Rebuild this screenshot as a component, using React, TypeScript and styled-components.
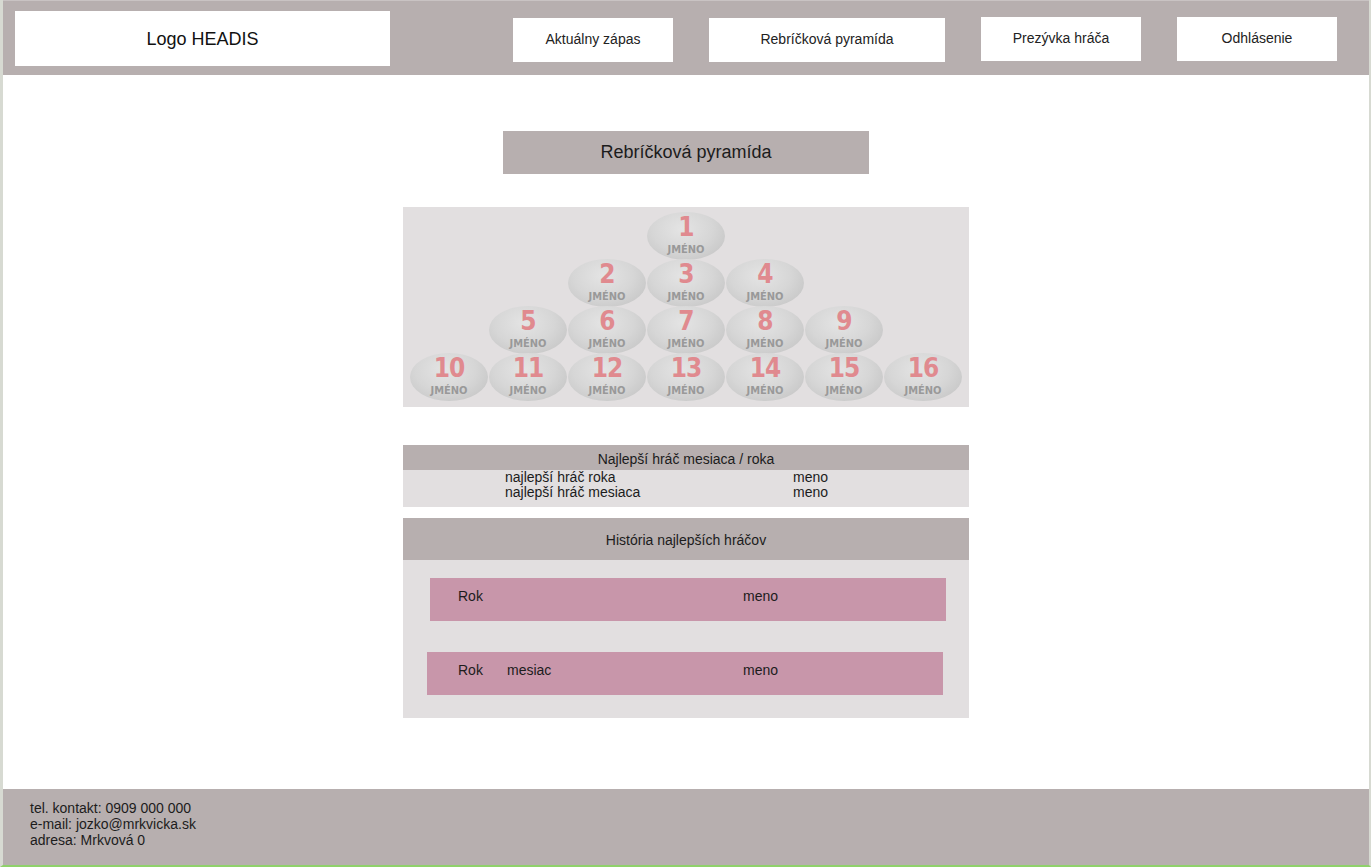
import React from "react";
import styled, { createGlobalStyle } from "styled-components";

const GlobalStyle = createGlobalStyle`
  html, body { margin: 0; padding: 0; background: #ffffff; }
  body { font-family: "Liberation Sans", Arial, sans-serif; color: #1a1a1a; }
  * { box-sizing: border-box; }
`;

const Page = styled.div`
  width: 1371px;
  height: 867px;
  border-left: 3px solid #d7dad2;
  border-right: 2px solid #d7dad2;
  border-bottom: 2px solid #8fd16b;
  display: flex;
  flex-direction: column;
  background: #ffffff;
`;

const Header = styled.header`
  height: 75px;
  background: #b7afaf;
  border-top: 1px solid #c9c3c3;
  display: flex;
  align-items: flex-start;
  padding: 0 32px 0 12px;
`;

const Logo = styled.div`
  margin-top: 10px;
  width: 375px;
  height: 55px;
  background: #ffffff;
  display: flex;
  align-items: center;
  justify-content: center;
  padding-top: 2px;
  font-size: 18px;
  color: #111;
`;

const Nav = styled.nav`
  margin-left: auto;
  display: flex;
  gap: 36px;
  margin-top: 16px;
`;

const NavButton = styled.div<{ $w: number; $dy?: number }>`
  width: ${(p) => p.$w}px;
  height: 44px;
  margin-top: ${(p) => p.$dy ?? 0}px;
  background: #ffffff;
  display: flex;
  align-items: center;
  justify-content: center;
  padding-bottom: 3px;
  font-size: 14px;
  color: #222;
`;

const Main = styled.main`
  height: 714px;
  display: flex;
  flex-direction: column;
  align-items: center;
`;

const Title = styled.div`
  margin-top: 56px;
  width: 366px;
  height: 43px;
  background: #b7afaf;
  display: flex;
  align-items: center;
  justify-content: center;
  font-size: 18px;
  color: #1c1c1c;
`;

const Pyramid = styled.div`
  margin-top: 33px;
  width: 566px;
  height: 200px;
  background: #e2dfe0;
  padding-top: 5px;
  display: flex;
  flex-direction: column;
  align-items: center;
`;

const BallRow = styled.div`
  height: 47px;
  display: flex;
  gap: 1px;
`;

const Ball = styled.div`
  width: 78px;
  height: 48px;
  border-radius: 50%;
  background: radial-gradient(ellipse at 45% 35%, #e4e4e4 0%, #d6d6d6 50%, #c6c6c6 85%, #bfbfbf 100%);
  display: flex;
  flex-direction: column;
  align-items: center;
`;

const BallNumber = styled.div`
  font-family: "DejaVu Sans Condensed", "DejaVu Sans", sans-serif;
  font-stretch: condensed;
  font-weight: bold;
  font-size: 26px;
  line-height: 31px;
  height: 31px;
  color: #e08a8f;
  letter-spacing: -1px;
`;

const BallName = styled.div`
  font-family: "DejaVu Sans Condensed", "DejaVu Sans", sans-serif;
  font-stretch: condensed;
  font-weight: bold;
  font-size: 11px;
  line-height: 13px;
  color: #999999;
`;

const Section = styled.section<{ $mt: number }>`
  margin-top: ${(p) => p.$mt}px;
  width: 566px;
  background: #e2dfe0;
`;

const SectionHeader = styled.div<{ $h: number }>`
  height: ${(p) => p.$h}px;
  background: #b7afaf;
  display: flex;
  align-items: center;
  justify-content: center;
  font-size: 14px;
  color: #1c1c1c;
  padding-top: 2px;
`;

const BestBody = styled.div`
  padding: 0 0 7px 102px;
  display: grid;
  grid-template-columns: 288px auto;
  font-size: 14px;
  line-height: 15px;
  color: #1c1c1c;
`;

const HistoryBody = styled.div`
  padding: 18px 0 23px;
  display: flex;
  flex-direction: column;
  gap: 31px;
`;

const HistoryRow = styled.div<{ $left: number }>`
  margin-left: ${(p) => p.$left}px;
  width: 516px;
  height: 43px;
  background: #c896aa;
  display: grid;
  grid-template-columns: 49px 236px auto;
  align-items: center;
  padding-left: ${(p) => 55 - p.$left}px;
  padding-bottom: 7px;
  font-size: 14px;
  color: #1c1c1c;
`;

const Footer = styled.footer`
  height: 76px;
  background: #b7afaf;
  padding: 11px 0 0 27px;
  font-size: 14px;
  line-height: 16px;
  color: #1c1c1c;
`;

const rows = [[1], [2, 3, 4], [5, 6, 7, 8, 9], [10, 11, 12, 13, 14, 15, 16]];

export default function App() {
  return (
    <>
      <GlobalStyle />
      <Page>
        <Header>
          <Logo>Logo HEADIS</Logo>
          <Nav>
            <NavButton $w={160} $dy={1}>Aktuálny zápas</NavButton>
            <NavButton $w={236} $dy={1}>Rebríčková pyramída</NavButton>
            <NavButton $w={160}>Prezývka hráča</NavButton>
            <NavButton $w={160}>Odhlásenie</NavButton>
          </Nav>
        </Header>
        <Main>
          <Title>Rebríčková pyramída</Title>
          <Pyramid>
            {rows.map((r, i) => (
              <BallRow key={i}>
                {r.map((n) => (
                  <Ball key={n}>
                    <BallNumber>{n}</BallNumber>
                    <BallName>JMÉNO</BallName>
                  </Ball>
                ))}
              </BallRow>
            ))}
          </Pyramid>
          <Section $mt={38}>
            <SectionHeader $h={25}>Najlepší hráč mesiaca / roka</SectionHeader>
            <BestBody>
              <span>najlepší hráč roka</span>
              <span>meno</span>
              <span>najlepší hráč mesiaca</span>
              <span>meno</span>
            </BestBody>
          </Section>
          <Section $mt={11}>
            <SectionHeader $h={42}>História najlepších hráčov</SectionHeader>
            <HistoryBody>
              <HistoryRow $left={27}>
                <span>Rok</span>
                <span></span>
                <span>meno</span>
              </HistoryRow>
              <HistoryRow $left={24}>
                <span>Rok</span>
                <span>mesiac</span>
                <span>meno</span>
              </HistoryRow>
            </HistoryBody>
          </Section>
        </Main>
        <Footer>
          <div>tel. kontakt: 0909 000 000</div>
          <div>e-mail: jozko@mrkvicka.sk</div>
          <div>adresa: Mrkvová 0</div>
        </Footer>
      </Page>
    </>
  );
}
